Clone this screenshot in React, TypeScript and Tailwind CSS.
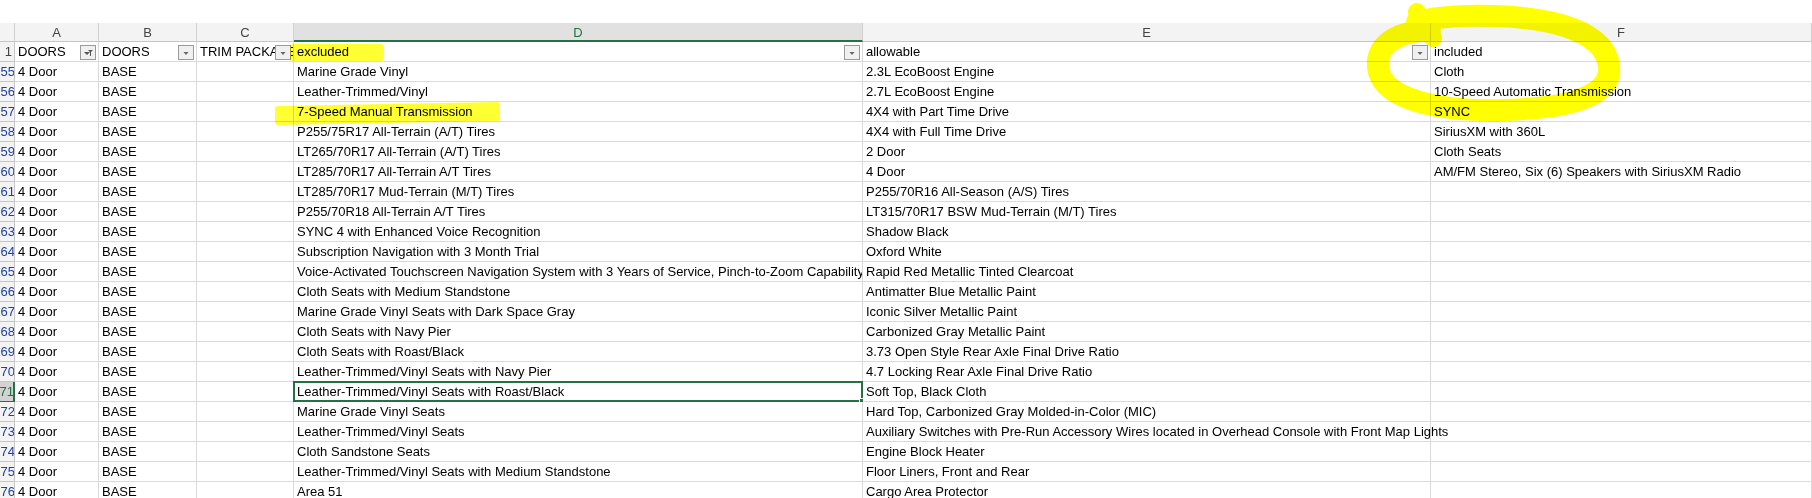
import React from "react";

const rows: [string, string, string, string][] = [
  ["55", "Marine Grade Vinyl", "2.3L EcoBoost Engine", "Cloth"],
  ["56", "Leather-Trimmed/Vinyl", "2.7L EcoBoost Engine", "10-Speed Automatic Transmission"],
  ["57", "7-Speed Manual Transmission", "4X4 with Part Time Drive", "SYNC"],
  ["58", "P255/75R17 All-Terrain (A/T) Tires", "4X4 with Full Time Drive", "SiriusXM with 360L"],
  ["59", "LT265/70R17 All-Terrain (A/T) Tires", "2 Door", "Cloth Seats"],
  ["60", "LT285/70R17 All-Terrain A/T Tires", "4 Door", "AM/FM Stereo, Six (6) Speakers with SiriusXM Radio"],
  ["61", "LT285/70R17 Mud-Terrain (M/T) Tires", "P255/70R16 All-Season (A/S) Tires", ""],
  ["62", "P255/70R18 All-Terrain A/T Tires", "LT315/70R17 BSW Mud-Terrain (M/T) Tires", ""],
  ["63", "SYNC 4 with Enhanced Voice Recognition", "Shadow Black", ""],
  ["64", "Subscription Navigation with 3 Month Trial", "Oxford White", ""],
  ["65", "Voice-Activated Touchscreen Navigation System with 3 Years of Service, Pinch-to-Zoom Capability", "Rapid Red Metallic Tinted Clearcoat", ""],
  ["66", "Cloth Seats with Medium Standstone", "Antimatter Blue Metallic Paint", ""],
  ["67", "Marine Grade Vinyl Seats with Dark Space Gray", "Iconic Silver Metallic Paint", ""],
  ["68", "Cloth Seats with Navy Pier", "Carbonized Gray Metallic Paint", ""],
  ["69", "Cloth Seats with Roast/Black", "3.73 Open Style Rear Axle Final Drive Ratio", ""],
  ["70", "Leather-Trimmed/Vinyl Seats with Navy Pier", "4.7 Locking Rear Axle Final Drive Ratio", ""],
  ["71", "Leather-Trimmed/Vinyl Seats with Roast/Black", "Soft Top, Black Cloth", ""],
  ["72", "Marine Grade Vinyl Seats", "Hard Top, Carbonized Gray Molded-in-Color (MIC)", ""],
  ["73", "Leather-Trimmed/Vinyl Seats", "Auxiliary Switches with Pre-Run Accessory Wires located in Overhead Console with Front Map Lights", ""],
  ["74", "Cloth Sandstone Seats", "Engine Block Heater", ""],
  ["75", "Leather-Trimmed/Vinyl Seats with Medium Standstone", "Floor Liners, Front and Rear", ""],
  ["76", "Area 51", "Cargo Area Protector", ""],
];

const cols = "grid-cols-[15px_84px_98px_97px_569px_568px_381px]";

function Drop({ filter }: { filter?: boolean }) {
  return (
    <span className="absolute right-[2px] top-[3px] w-[16px] h-[15px] border border-[#9a9a9a] bg-[#f0f0f0] flex items-center justify-center">
      <svg width="10" height="8" viewBox="0 0 10 8">
        {filter ? (
          <>
            <path d="M1 3 L4 6 L7 3 Z" fill="#555" />
            <path d="M5 1 H10 L8 3 V7 H7 V3 Z" fill="#555" />
          </>
        ) : (
          <path d="M2.5 3 L5 6 L7.5 3 Z" fill="#666" />
        )}
      </svg>
    </span>
  );
}

const base = "relative h-[20px] border-r border-b border-[#dadada] px-[3px] leading-[19px] whitespace-nowrap";
const cell = `${base} overflow-visible`;
const clip = `${base} overflow-hidden`;

export default function App() {
  return (
    <div className="relative w-[1812px] h-[498px] overflow-hidden bg-white text-[13px] text-black" style={{ fontFamily: '"Liberation Sans", Arial, sans-serif' }}>
      <div className="h-[23px]" />
      <div className={`grid ${cols}`}>
        {["", "A", "B", "C", "D", "E", "F"].map((l, i) => (
          <div
            key={i}
            className={`h-[19px] text-center leading-[19px] border-r border-b text-[#444] ${
              l === "D" ? "bg-[#e1e1e1] border-b-2 border-b-[#217346] text-[#217346]" : "bg-[#f3f3f3] border-[#c6c6c6]"
            } border-r-[#d0d0d0]`}
          >
            {l}
          </div>
        ))}
        <div className="h-[20px] bg-[#f3f3f3] border-r border-b border-[#c6c6c6] text-[#444] text-right pr-[2px] leading-[19px]">1</div>
        <div className={cell}>DOORS<Drop filter /></div>
        <div className={cell}>DOORS<Drop /></div>
        <div className={clip}>TRIM PACKAGE<Drop /></div>
        <div className={cell}>excluded<Drop /></div>
        <div className={cell}>allowable<Drop /></div>
        <div className={cell}>included</div>
        {rows.map(([n, d, e, f]) => (
          <React.Fragment key={n}>
            <div className={`h-[20px] border-r border-b text-right leading-[19px] overflow-hidden flex justify-end ${n === "71" ? "bg-[#d2d2d2] border-r-[#217346] border-r-2 text-[#217346]" : "bg-[#f3f3f3] border-[#c6c6c6] text-[#1f3fa0]"}`}>
              <span className="-mr-[1px]">{n}</span>
            </div>
            <div className={cell}>4 Door</div>
            <div className={cell}>BASE</div>
            <div className={cell}></div>
            <div className={n === "65" ? clip : cell}>
              {d}
              {n === "71" && (
                <span className="absolute -left-[1px] -top-[1px] right-[-1px] bottom-[-1px] border-2 border-[#217346]">
                  <span className="absolute -right-[3px] -bottom-[3px] w-[5px] h-[5px] bg-[#217346] border border-white" />
                </span>
              )}
            </div>
            <div className={cell}>{e}</div>
            <div className={cell}>{f}</div>
          </React.Fragment>
        ))}
      </div>
      {/* yellow highlights */}
      <div className="absolute left-[290px] top-[44px] w-[94px] h-[17px] bg-[#ffff00]/80 rounded-[3px] mix-blend-multiply" />
      <div className="absolute left-[275px] top-[104px] w-[225px] h-[19px] bg-[#ffff00]/80 rounded-[3px] -rotate-1 mix-blend-multiply" />
      <svg className="absolute left-[1355px] top-0 mix-blend-multiply" width="275" height="125" viewBox="0 0 275 125">
        <path
          d="M75 30 C35 32 18 50 24 72 C32 100 85 112 150 110 C215 108 258 96 254 66 C250 32 200 18 140 16 C110 15 85 16 62 22"
          fill="none"
          stroke="#ffff00"
          strokeWidth="22"
          strokeLinecap="round"
        />
        <path d="M62 12 L78 38" stroke="#ffff00" strokeWidth="18" strokeLinecap="round" />
      </svg>
    </div>
  );
}
